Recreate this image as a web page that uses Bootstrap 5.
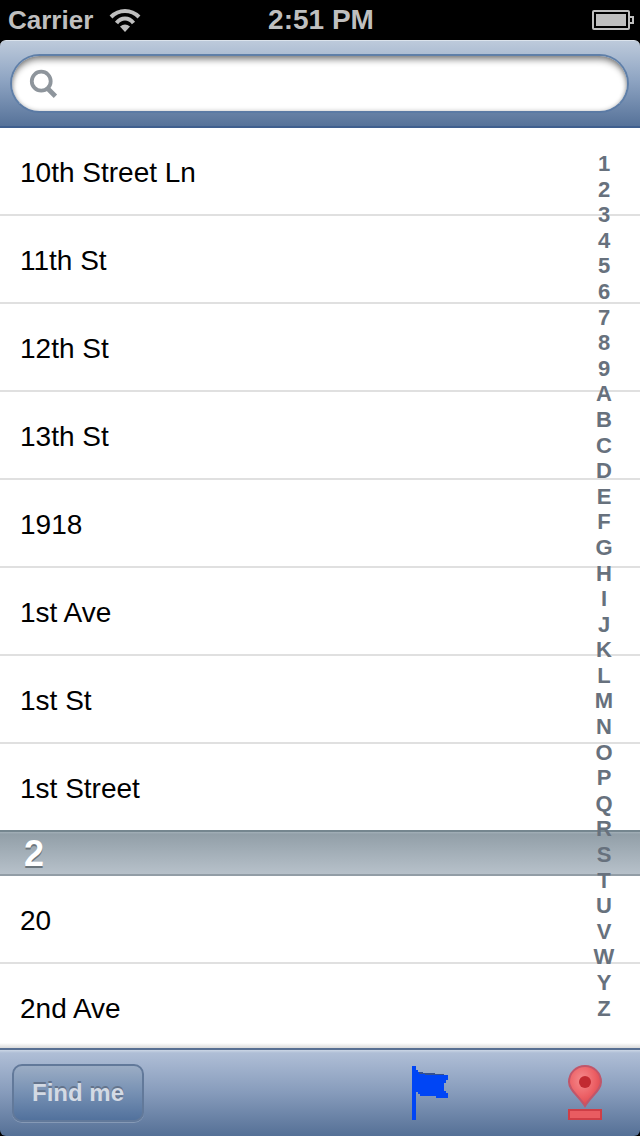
<!DOCTYPE html>
<html lang="en">
<head>
<meta charset="utf-8">
<meta name="viewport" content="width=device-width, initial-scale=1">
<title>Streets</title>
<link href="https://cdn.jsdelivr.net/npm/bootstrap@5.3.0/dist/css/bootstrap.min.css" rel="stylesheet">
<style>
body { background: #000; color: #000; font-family: "Liberation Sans", Arial, sans-serif; }
.status-bar { height: 40px; padding: 0 6px; color: #bfbfbf; font-size: 26px; line-height: 40px; font-weight: 700; }
.carrier { padding-left: 2px; }
.clock { font-size: 28px; }
.search-bar { height: 88px; padding: 13px 11px 15px 10px; border-radius: 6px 6px 0 0; border-top: 1px solid #dbe3ec; border-bottom: 2px solid #3f5f8e;
  background: linear-gradient(#bdcadb, #8fa5c3 45%, #567299); }
.search-field { height: 59px; border: 2px solid #5f7fa8; border-bottom-color: #5b7aa4; border-radius: 30px; padding: 0 16px; background: #fff;
  box-shadow: inset 0 5px 6px -1px rgba(0,0,0,.42), inset 0 0 4px rgba(0,0,0,.25); }
.search-field input { font-size: 28px; }
.street-area { flex: 1 1 0; min-height: 0; background: #fff; }
.street { height: 88px; padding: 4px 20px 0; font-size: 28px; border-bottom: 2px solid #e0e0e0; }
.street a { color: #000; }
.street-end { height: 86px; border-bottom: 0; }
.section-head { height: 46px; padding-left: 24px; margin: 0; font-size: 36px; line-height: 44px; font-weight: 700; color: #fff;
  text-shadow: 0 2px 0 #6b757c; border-top: 2px solid #75868f; border-bottom: 2px solid #929da6;
  background: linear-gradient(#a4b1b9, #929fa8 5%, #b7c1ca); }
.index-strip { width: 72px; padding: 23px 0 27px; }
.index-strip a { flex: 1 1 0; min-height: 0; color: #67717d; font-size: 22px; font-weight: 700; line-height: 26px; }
.list-shade { height: 5px; background: linear-gradient(rgba(255,255,255,0), #d9d9d9); }
.tool-bar { height: 88px; padding: 0 37px 0 12px; border-top: 2px solid #586f92; border-radius: 0 0 6px 6px;
  background: linear-gradient(#cbd6e5, #afbed6 3px, #869bbb 50%, #557096); }
.find-btn { width: 132px; height: 58px; padding: 0; border: 2px solid #62799a; border-radius: 10px; color: #d3dae4; font-size: 24px; font-weight: 700;
  text-shadow: 0 -2px 0 #64748c; background: linear-gradient(#9eafc6, #7690b3 50%, #4f6f9b) border-box; box-shadow: 0 1px 0 rgba(255,255,255,.22); }
.icon-btn { padding: 0; border: 0; background: none; line-height: 0; }
.tool-icons { gap: 118px; }
</style>
</head>
<body class="vh-100 d-flex flex-column overflow-hidden">
<div class="status-bar row g-0 flex-shrink-0">
  <div class="col carrier d-flex align-items-center gap-3">
    <span>Carrier</span>
    <svg width="34" height="24" viewBox="0 0 34 24" aria-hidden="true">
      <g fill="none" stroke="#bfbfbf" stroke-width="4"><path d="M2 9Q8 3 16 3t14 6M7.500 15Q11 10.500 16 10.500T24.500 15"/></g>
      <path d="M11 18.500q5-4 10 0L16 24z" fill="#bfbfbf"/>
    </svg>
  </div>
  <div class="col-auto clock">2:51 PM</div>
  <div class="col d-flex align-items-center justify-content-end">
    <svg width="42" height="20" viewBox="0 0 42 20" aria-hidden="true"><rect x="1" y="1" width="36" height="18" rx="1" fill="none" stroke="#bfbfbf" stroke-width="2"/><path fill="#bfbfbf" d="M4 4h30v12H4z"/><path d="M38 7h3v6h-3" fill="none" stroke="#bfbfbf" stroke-width="2"/></svg>
  </div>
</div>
<header class="search-bar flex-shrink-0">
  <label class="search-field d-flex align-items-center">
    <svg width="32" height="32" viewBox="0 0 32 32" fill="none" stroke="#8e959c" stroke-width="4" role="img" aria-label="Search"><circle cx="14" cy="13" r="10"/><path d="M20 20l9 9" stroke-width="5"/></svg>
    <input type="search" class="form-control border-0 bg-transparent shadow-none py-0" aria-label="Search streets">
  </label>
</header>
<main class="street-area position-relative overflow-hidden">
  <ul class="list-unstyled m-0">
    <li class="street d-flex align-items-center"><a href="#" class="text-decoration-none">10th Street Ln</a></li>
    <li class="street d-flex align-items-center"><a href="#" class="text-decoration-none">11th St</a></li>
    <li class="street d-flex align-items-center"><a href="#" class="text-decoration-none">12th St</a></li>
    <li class="street d-flex align-items-center"><a href="#" class="text-decoration-none">13th St</a></li>
    <li class="street d-flex align-items-center"><a href="#" class="text-decoration-none">1918</a></li>
    <li class="street d-flex align-items-center"><a href="#" class="text-decoration-none">1st Ave</a></li>
    <li class="street d-flex align-items-center"><a href="#" class="text-decoration-none">1st St</a></li>
    <li class="street street-end d-flex align-items-center"><a href="#" class="text-decoration-none">1st Street</a></li>
  </ul>
  <h2 class="section-head">2</h2>
  <ul class="list-unstyled m-0">
    <li class="street d-flex align-items-center"><a href="#" class="text-decoration-none">20</a></li>
    <li class="street d-flex align-items-center"><a href="#" class="text-decoration-none">2nd Ave</a></li>
  </ul>
  <nav class="index-strip position-absolute top-0 end-0 bottom-0 d-flex flex-column text-center" aria-label="Section index">
    <a href="#" class="text-decoration-none">1</a><a href="#" class="text-decoration-none">2</a><a href="#" class="text-decoration-none">3</a>
    <a href="#" class="text-decoration-none">4</a><a href="#" class="text-decoration-none">5</a><a href="#" class="text-decoration-none">6</a>
    <a href="#" class="text-decoration-none">7</a><a href="#" class="text-decoration-none">8</a><a href="#" class="text-decoration-none">9</a>
    <a href="#" class="text-decoration-none">A</a><a href="#" class="text-decoration-none">B</a><a href="#" class="text-decoration-none">C</a>
    <a href="#" class="text-decoration-none">D</a><a href="#" class="text-decoration-none">E</a><a href="#" class="text-decoration-none">F</a>
    <a href="#" class="text-decoration-none">G</a><a href="#" class="text-decoration-none">H</a><a href="#" class="text-decoration-none">I</a>
    <a href="#" class="text-decoration-none">J</a><a href="#" class="text-decoration-none">K</a><a href="#" class="text-decoration-none">L</a>
    <a href="#" class="text-decoration-none">M</a><a href="#" class="text-decoration-none">N</a><a href="#" class="text-decoration-none">O</a>
    <a href="#" class="text-decoration-none">P</a><a href="#" class="text-decoration-none">Q</a><a href="#" class="text-decoration-none">R</a>
    <a href="#" class="text-decoration-none">S</a><a href="#" class="text-decoration-none">T</a><a href="#" class="text-decoration-none">U</a>
    <a href="#" class="text-decoration-none">V</a><a href="#" class="text-decoration-none">W</a><a href="#" class="text-decoration-none">Y</a>
    <a href="#" class="text-decoration-none">Z</a>
  </nav>
  <div class="list-shade position-absolute start-0 end-0 bottom-0"></div>
</main>
<footer class="tool-bar flex-shrink-0 d-flex align-items-center justify-content-between">
  <button type="button" class="btn find-btn">Find me</button>
  <div class="tool-icons d-flex">
    <button type="button" class="icon-btn" aria-label="Flag">
      <svg width="38" height="56" viewBox="0 0 38 56"><path fill="#0045f5" d="M1 1h4v4h2v2h4v2h12v1h14v5h-2v3h-2v8h2v2h2v5H25v-2H9v-2H7v-2H5v28H1z"/><path d="M8 7h4v1h12v1h9v1H14V9H8z" fill="#35508f"/></svg>
    </button>
    <button type="button" class="icon-btn" aria-label="Drop pin">
      <svg width="36" height="56" viewBox="0 0 36 56">
        <defs><radialGradient id="pinFill" cx=".4" cy=".35" r=".7"><stop offset="0" stop-color="#f58a8c"/><stop offset=".6" stop-color="#ec6065"/><stop offset="1" stop-color="#d8444c"/></radialGradient></defs>
        <path d="M18 1C9 1 2 8 2 17c0 8 10 14 16 24 6-10 16-16 16-24C34 8 27 1 18 1z" fill="url(#pinFill)" stroke="#c0566a" stroke-width="2"/>
        <circle cx="18" cy="17" r="6" fill="#c22a31"/>
        <path d="M2 45h32v9H2z" fill="#e95c61" stroke="#cf3e46" stroke-width="2"/>
      </svg>
    </button>
  </div>
</footer>
<script src="https://cdn.jsdelivr.net/npm/bootstrap@5.3.0/dist/js/bootstrap.bundle.min.js"></script>
</body>
</html>
